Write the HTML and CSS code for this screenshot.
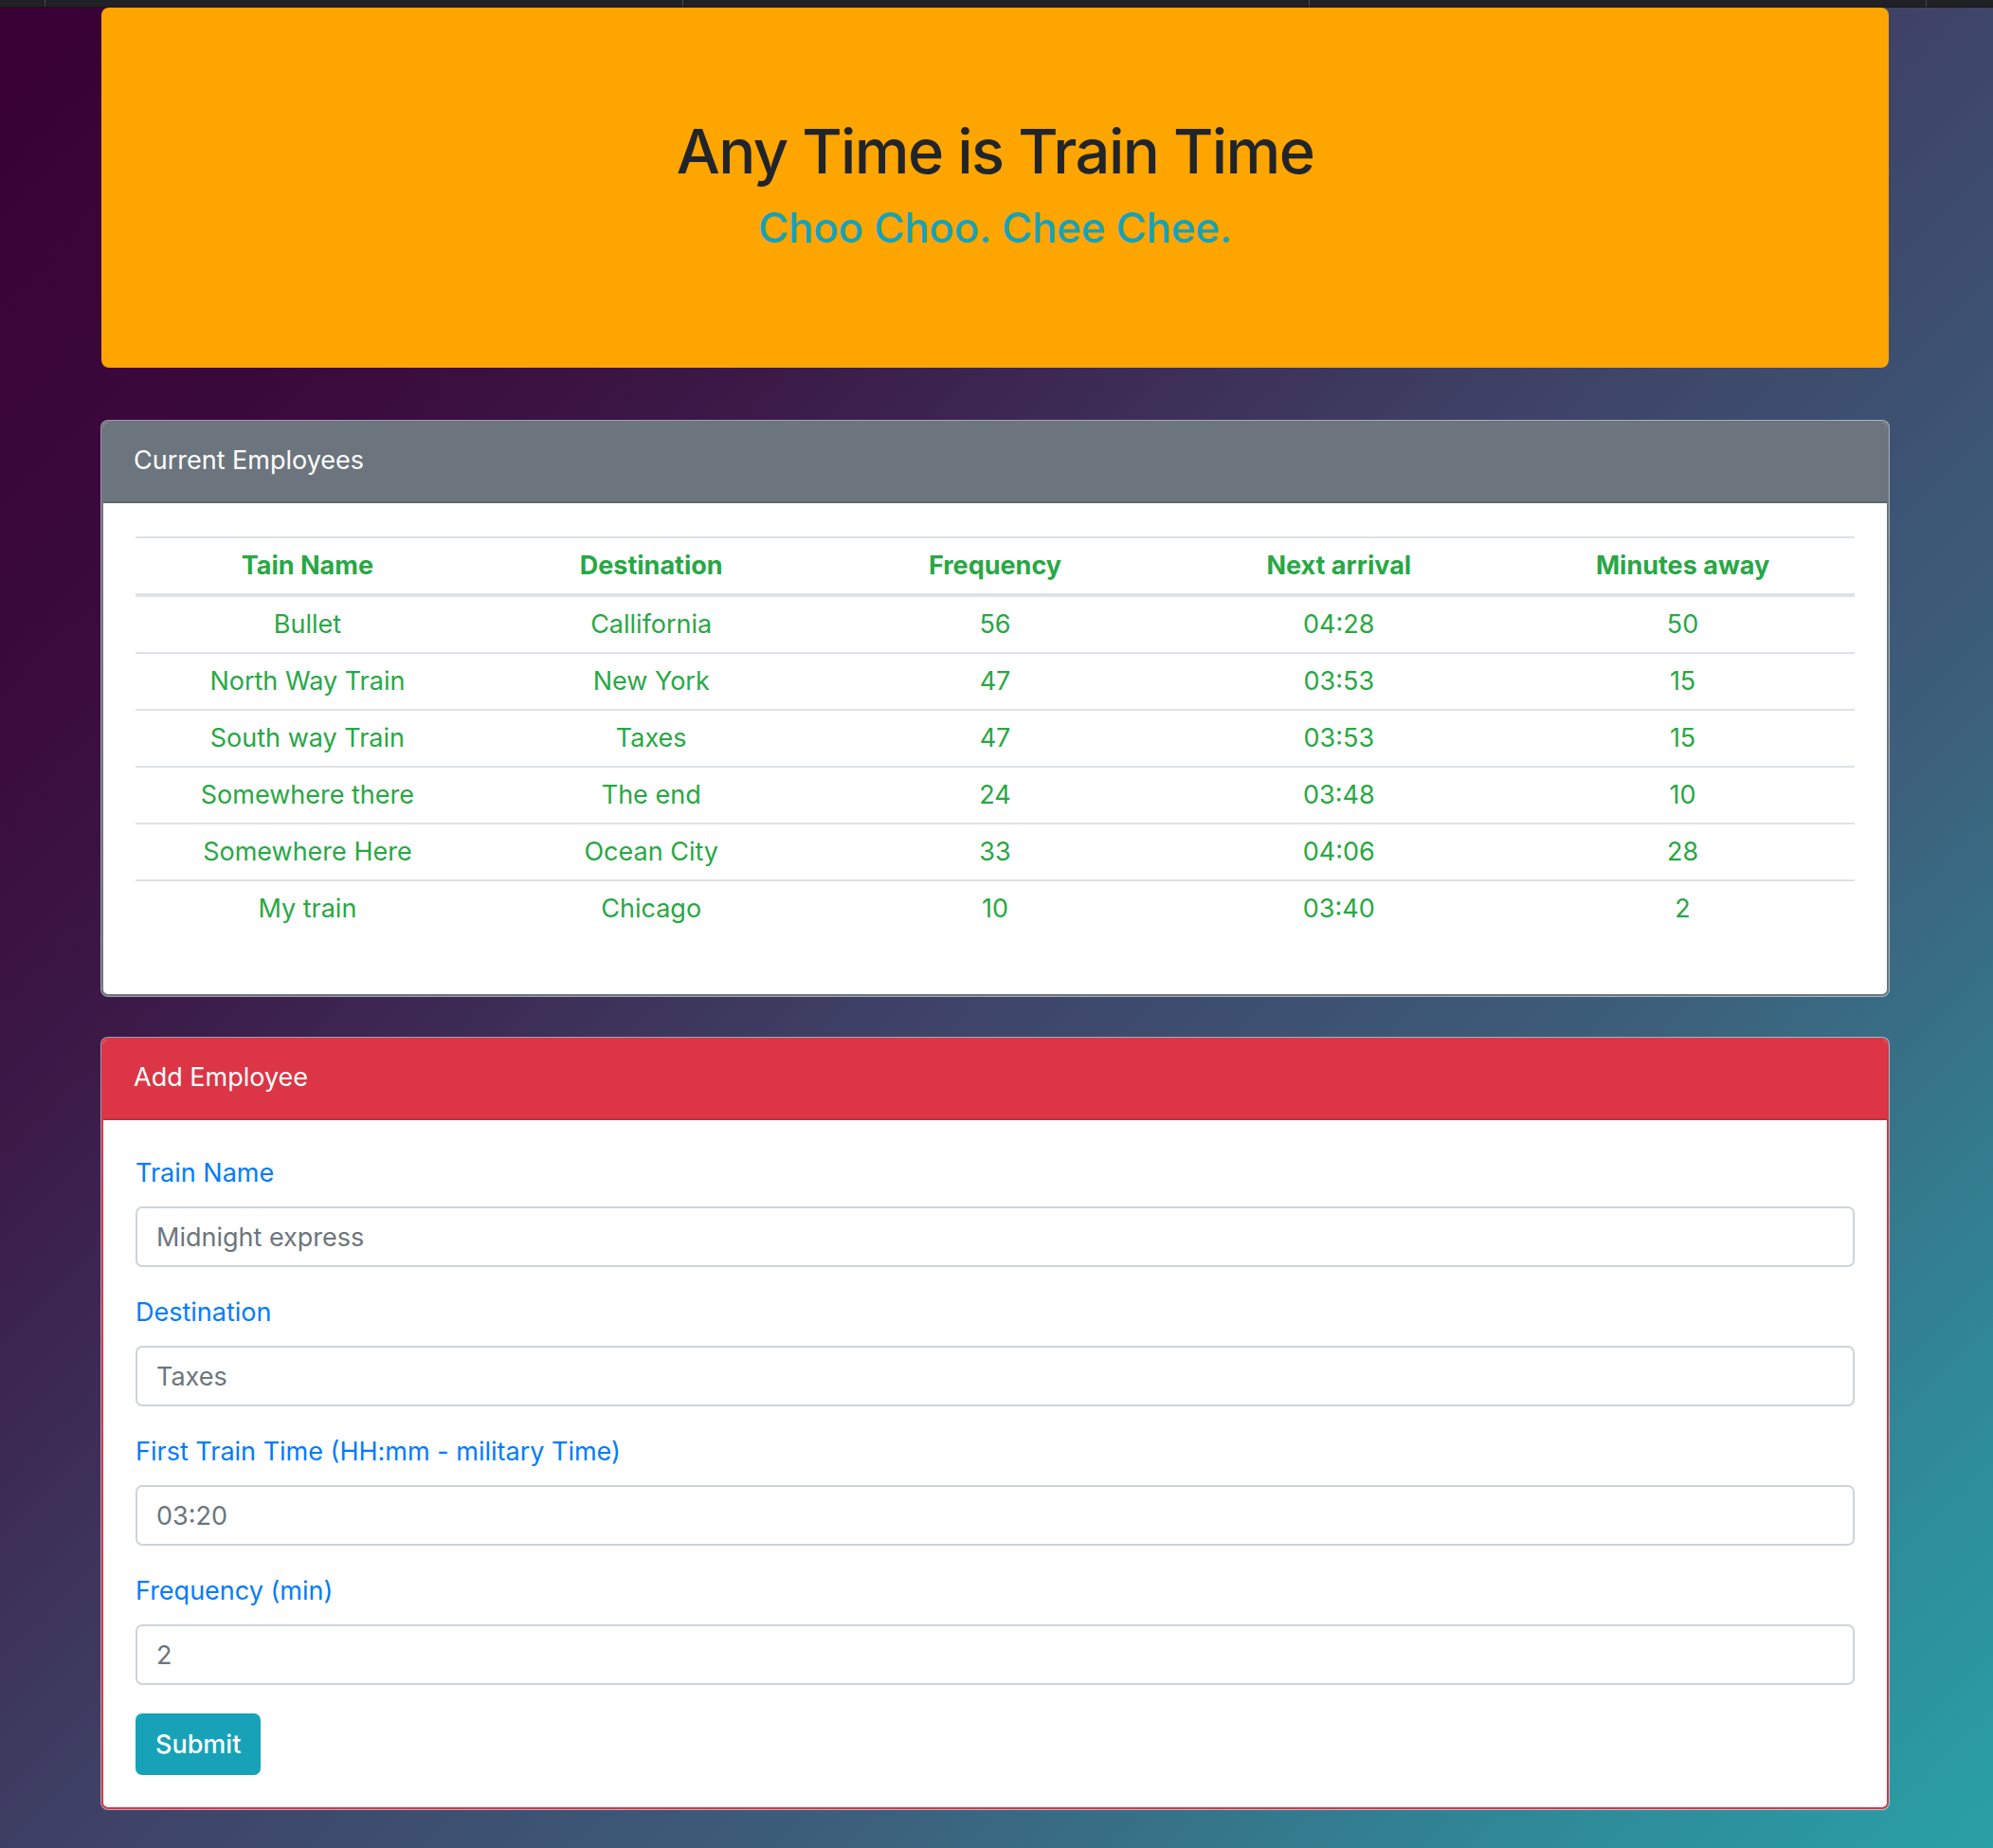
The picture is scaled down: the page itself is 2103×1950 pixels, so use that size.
FILE: index.html
```html
<!DOCTYPE html>
<html lang="en">
<head>
<meta charset="utf-8">
<title>Train Scheduler</title>
<link rel="stylesheet" href="styles.css">
</head>
<body>
<div class="tabbar">
  <span class="tab t1"></span>
  <span class="tab t2"></span>
  <span class="tab t3"></span>
  <span class="tab t4"></span>
  <span class="tab t5"></span>
</div>
<main class="container">
  <header class="jumbotron">
    <h1 class="title">Any Time is Train Time</h1>
    <h3 class="subtitle">Choo Choo. Chee Chee.</h3>
  </header>

  <section class="card card-secondary">
    <div class="card-header">Current Employees</div>
    <div class="card-body">
      <table class="table">
        <thead>
          <tr><th>Tain Name</th><th>Destination</th><th>Frequency</th><th>Next arrival</th><th>Minutes away</th></tr>
        </thead>
        <tbody>
          <tr><td>Bullet</td><td>Callifornia</td><td>56</td><td>04:28</td><td>50</td></tr>
          <tr><td>North Way Train</td><td>New York</td><td>47</td><td>03:53</td><td>15</td></tr>
          <tr><td>South way Train</td><td>Taxes</td><td>47</td><td>03:53</td><td>15</td></tr>
          <tr><td>Somewhere there</td><td>The end</td><td>24</td><td>03:48</td><td>10</td></tr>
          <tr><td>Somewhere Here</td><td>Ocean City</td><td>33</td><td>04:06</td><td>28</td></tr>
          <tr><td>My train</td><td>Chicago</td><td>10</td><td>03:40</td><td>2</td></tr>
        </tbody>
      </table>
    </div>
  </section>

  <section class="card card-danger">
    <div class="card-header">Add Employee</div>
    <form class="card-body">
      <div class="form-group">
        <label class="form-label" for="name">Train Name</label>
        <input class="form-control" id="name" type="text" value="Midnight express">
      </div>
      <div class="form-group">
        <label class="form-label" for="dest">Destination</label>
        <input class="form-control" id="dest" type="text" value="Taxes">
      </div>
      <div class="form-group">
        <label class="form-label" for="first">First Train Time (HH:mm - military Time)</label>
        <input class="form-control" id="first" type="text" value="03:20">
      </div>
      <div class="form-group last">
        <label class="form-label" for="freq">Frequency (min)</label>
        <input class="form-control" id="freq" type="text" value="2">
      </div>
      <button class="btn-info" type="button">Submit</button>
    </form>
  </section>
</main>
</body>
</html>
```

FILE: styles.css
```css
* { box-sizing: border-box; }

html {
  background: #2a9da3;
}

body {
  margin: 0;
  min-height: 1950px;
  font-family: Inter, "Noto Sans", "Liberation Sans", sans-serif;
  font-size: 27px;
  line-height: 41px;
  color: #212529;
  background: linear-gradient(135deg, #390034 0%, #3a0a3c 18%, #3b1a48 30%, #3e4266 50%, #3c607c 70%, #2f8a98 88%, #29a0a6 100%);
}

.tabbar {
  display: flex;
  height: 8px;
  background: #202124;
  border-bottom: 1px solid #17171a;
}
.tab { height: 100%; }
.t1 { width: 47px; }
.t2 { width: 673px; border-left: 1px solid #45474b; }
.t3 { width: 661px; border-left: 1px solid #45474b; }
.t4 { width: 651px; border-left: 1px solid #45474b; }
.t5 { flex: 1; border-left: 1px solid #45474b; }

.container {
  width: 1886px;
  margin: 0 0 0 107px;
}

.jumbotron {
  background: #ffa500;
  border-radius: 8px;
  padding: 113px 34px 121px;
  text-align: center;
  margin-bottom: 56px;
}

.title {
  margin: 0 0 15px;
  font-size: 65px;
  line-height: 78px;
  font-weight: 500;
  color: #212529;
  letter-spacing: -1.6px;
}

.subtitle {
  margin: 0;
  font-size: 44px;
  line-height: 53px;
  font-weight: 500;
  color: #17a2b8;
  letter-spacing: -0.3px;
}

.card {
  background: #fff;
  border: 2px solid #6c757d;
  border-radius: 7px;
  box-shadow: 0 0 0 1px rgba(255, 255, 255, 0.55);
  overflow: hidden;
}
.card-secondary { border-color: #6c757d; margin-bottom: 44px; }
.card-danger { border-color: #dc3545; }

.card-header {
  padding: 19px 32px 23px;
  color: #fff;
  font-size: 27px;
  line-height: 41px;
  border-bottom: 2px solid rgba(0, 0, 0, 0.125);
}
.card-secondary .card-header { background: #6c757d; }
.card-danger .card-header { background: #dc3545; }

.card-body {
  display: block;
  padding: 35px 34px 34px;
}

.table {
  width: 100%;
  table-layout: fixed;
  border-collapse: collapse;
  margin-bottom: 27px;
  color: #28a745;
  text-align: center;
}
.table th,
.table td {
  padding: 8px 4px;
  line-height: 42px;
  font-size: 27px;
}
.table th {
  font-weight: 700;
  border-top: 2px solid #dee2e6;
  border-bottom: 4px solid #dee2e6;
}
.table td {
  font-weight: 400;
  border-top: 2px solid #dee2e6;
}
.table tbody tr:first-child td { border-top: 0; }

.form-group {
  margin-bottom: 27px;
}
.form-group.last { margin-bottom: 30px; }

.form-label {
  display: block;
  color: #007bff;
  font-size: 27px;
  line-height: 41px;
  margin-bottom: 15px;
}

.form-control {
  display: block;
  width: 100%;
  height: 64px;
  padding: 0 20px;
  font-family: inherit;
  font-size: 27px;
  color: #6c757d;
  background: #fff;
  border: 2px solid #ced4da;
  border-radius: 7px;
  outline: none;
}

.btn-info {
  display: block;
  height: 65px;
  padding: 0 21px;
  font-family: inherit;
  font-size: 27px;
  font-weight: 500;
  color: #fff;
  background: #17a2b8;
  border: 0;
  border-radius: 7px;
}
```
